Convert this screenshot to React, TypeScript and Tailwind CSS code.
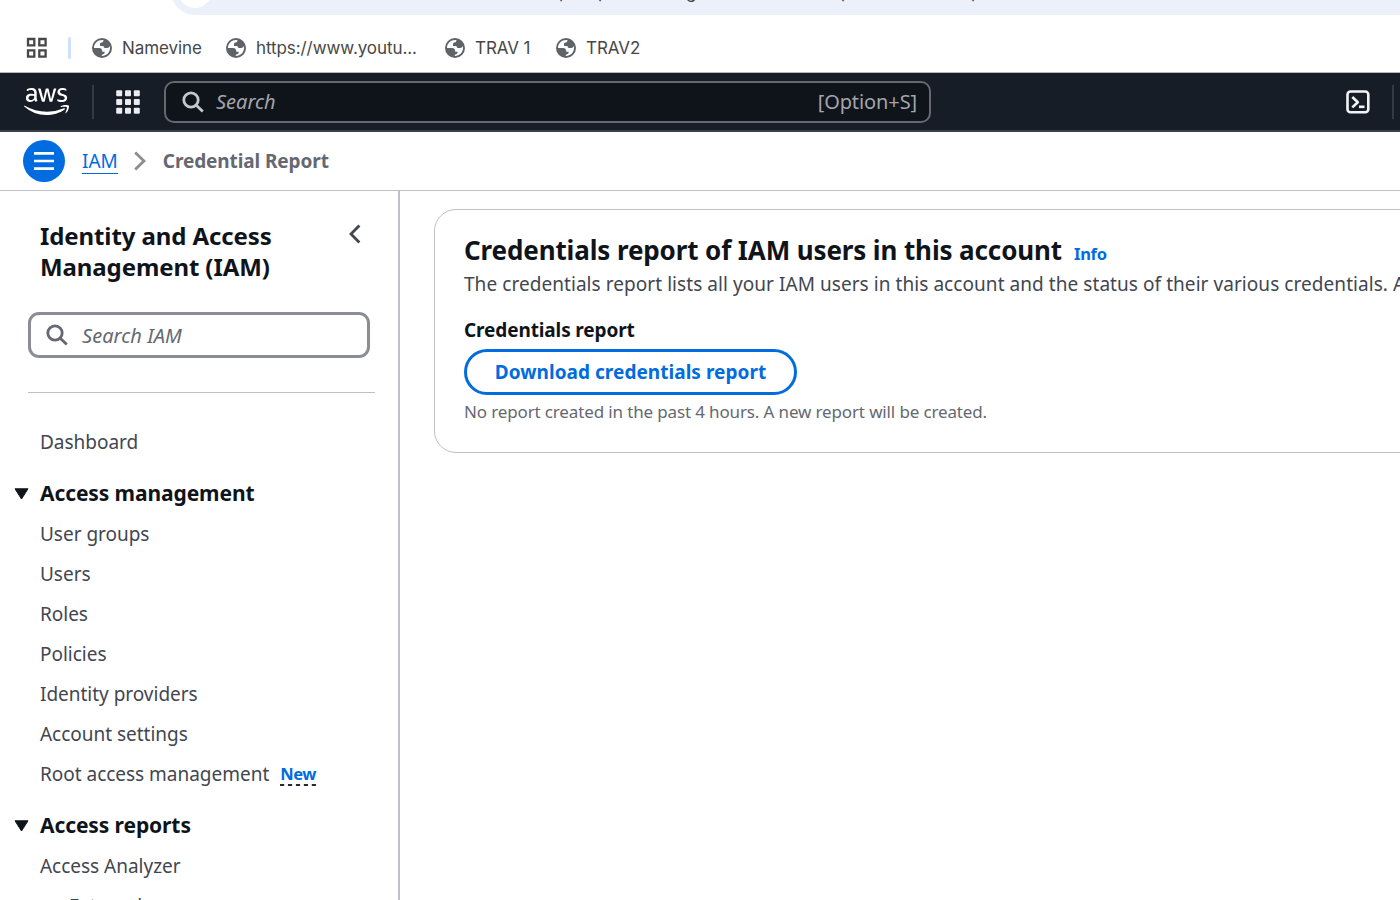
import React from "react";
import { FaAws } from "react-icons/fa";

function Globe() {
  return (
    <svg className="h-5 w-5 shrink-0" viewBox="0 0 20 20">
      <circle cx="10" cy="10" r="10" fill="#5f6368" />
      <path
        fill="#fff"
        d="M11.400 2.100C6.300 1.400 2 5.200 2 9.900h5.200c1.700 0 3 1.300 3 2.900v1h2.500c.2 1.600-.9 2.600-2.900 2.900v1.300c4.500.1 8.200-3.600 8.200-8 0-.7-.1-1.400-.3-2-.5 1.300-1.300 2-2.400 2h-1.600c-1.400 0-2.200-.8-2.200-2.100H8V6.100c0-1 .8-1.600 1.800-1.600 1 0 1.700-.9 1.600-2.400z"
      />
    </svg>
  );
}

function SearchIcon({ className }: { className: string }) {
  return (
    <svg className={className} viewBox="0 0 22 22" fill="none" stroke="currentColor" strokeWidth="2.8">
      <circle cx="9" cy="9" r="7.200" />
      <path d="M14 14l6.800 6.500" />
    </svg>
  );
}

function Bookmark({ label, className }: { label: string; className: string }) {
  return (
    <div className={`flex h-6 items-center gap-[10px] ${className}`}>
      <Globe />
      <span className="pt-px text-[17px] tracking-[-0.08px] whitespace-nowrap">{label}</span>
    </div>
  );
}

function Section({ label }: { label: string }) {
  return (
    <div className="mt-3 flex h-10 shrink-0 items-center">
      <svg className="mr-[11px] h-[12px] w-[15px]" viewBox="0 0 15 12">
        <path d="M1 .8h13L7.500 11z" fill="#0f141a" stroke="#0f141a" strokeLinejoin="round" />
      </svg>
      <span className="text-[21px] font-bold tracking-[-0.1px] text-[#0f141a]">{label}</span>
    </div>
  );
}

function Item({ label, tag }: { label: string; tag?: string }) {
  return (
    <div className="flex h-10 shrink-0 items-center pl-[26px] text-[19px] tracking-[-0.02px] text-[#424650]">
      {label}
      {tag && (
        <span className="ml-[11px] flex h-[24px] flex-col">
          <span className="h-[22px] text-[16.500px] leading-[23px] font-bold tracking-[-0.4px] text-[#006ce0]">{tag}</span>
          <svg className="h-[2px] w-9" viewBox="0 0 36 2">
            <path d="M0 1h36" stroke="#232b37" strokeWidth="2" strokeDasharray="4.200 3.740" />
          </svg>
        </span>
      )}
    </div>
  );
}

export default function App() {
  return (
    <div className="flex h-[900px] w-[1400px] flex-col overflow-hidden bg-white font-['Noto_Sans',sans-serif]">
      <div className="h-[72px] shrink-0 font-[Inter,sans-serif] text-[#474747]">
        <div className="flex h-[15px] items-end overflow-hidden pl-[171px]">
          <div className="flex h-12 w-[1300px] shrink-0 items-center rounded-full bg-[#ecf0fa] pl-[7px]">
            <div className="h-[34px] w-[34px] shrink-0 rounded-full bg-white" />
            <div className="flex pt-[2px] pl-[347px] text-[17px] leading-5">
              <span className="w-[39px]">p</span>
              <span className="w-[88px]">p</span>
              <span className="w-[155px]">g</span>
              <span className="w-[98px]">p</span>
              <span className="w-[32px] font-semibold">_</span>
              <span>p</span>
            </div>
          </div>
        </div>
        <div className="flex pt-[21px]">
          <div className="flex h-6 w-[92px] items-center pl-[26px]">
            <svg className="h-[22px] w-[22px]" viewBox="0 0 22 22" fill="none" stroke="#474747" strokeWidth="2.300">
              <path d="M2 2h6.300v6.300H2zM13.300 2h6.300v6.300h-6.300zM2 13.300h6.300v6.300H2zM13.300 13.300h6.300v6.300h-6.300z" />
            </svg>
            <div className="ml-5 h-[22px] w-[3px] rounded-full bg-[#d0e0fc]" />
          </div>
          <Bookmark label="Namevine" className="w-[134px]" />
          <Bookmark label="https://www.youtu..." className="w-[219px]" />
          <Bookmark label="TRAV 1" className="w-[111px]" />
          <Bookmark label="TRAV2" className="" />
        </div>
      </div>

      <header className="flex h-[60px] shrink-0 items-center border-t border-b-2 border-t-[#b4b8ba] border-b-[#3a414d] bg-[#161d26]">
        <FaAws className="ml-[24px] h-[37px] w-[45px] text-white" />
        <div className="ml-[23px] h-[34px] w-[2px] bg-[#333a46]" />
        <svg className="ml-[22px] h-6 w-6" viewBox="0 0 24 24" fill="#ebebf0">
          {[0, 8.8, 17.6].map((y) =>
            [0, 8.8, 17.6].map((x) => <rect key={`${x}-${y}`} x={x + 0.2} y={y + 0.2} width="6" height="6" rx="1" />)
          )}
        </svg>
        <div className="mt-px ml-[24px] flex h-[42px] w-[767px] items-center rounded-[10px] border-[2.500px] border-[#656871] bg-[#0f141a] text-[20px] text-[#a4a4ad]">
          <SearchIcon className="ml-4 h-[22px] w-[22px] text-[#c6c6cd]" />
          <span className="ml-3 flex-1 italic">Search</span>
          <span className="mr-3 tracking-[-0.1px]">[Option+S]</span>
        </div>
        <svg className="ml-[415px] h-6 w-6" viewBox="0 0 24 24" fill="none" stroke="#f3f3f7" strokeWidth="2.600">
          <rect x="1.500" y="1.500" width="20.800" height="20.800" rx="3" />
          <path d="M6.300 7l5.500 5.200-5.500 5.200" strokeLinejoin="round" />
          <path d="M13 16.800h5.500" />
        </svg>
        <div className="ml-[22px] h-[34px] w-[2px] bg-[#333a46]" />
      </header>

      <div className="flex h-[59px] shrink-0 items-center border-b border-[#c0c0c8] text-[19px]">
        <div className="ml-[23px] flex h-[42px] w-[42px] items-center justify-center rounded-full bg-[#006ce0]">
          <svg className="h-[20px] w-[20px]" viewBox="0 0 20 20" stroke="#fff" strokeWidth="2.700">
            <path d="M0 2.400h20M0 10h20M0 17.600h20" />
          </svg>
        </div>
        <span className="ml-[17px] h-[26px] border-b-[1.500px] border-[#006ce0] leading-[26px] text-[#006ce0]">IAM</span>
        <svg className="ml-[16px] h-[20px] w-3" viewBox="0 0 12 20" fill="none" stroke="#8c8c94" strokeWidth="2.800">
          <path d="M1.200 1.500l8.800 8.500-8.800 8.500" />
        </svg>
        <span className="ml-[17px] font-bold tracking-[-0.1px] text-[#656871]">Credential Report</span>
      </div>

      <div className="flex min-h-0 flex-1">
        <nav className="flex w-[400px] shrink-0 flex-col overflow-hidden border-r-2 border-[#c0c0c8] pl-[14px]">
          <div className="flex shrink-0 justify-between pt-[29px] pr-[37px] pl-[26px]">
            <div className="h-[63px] text-[24px] leading-[31px] font-bold tracking-[-0.1px] text-[#0f141a]">
              Identity and Access
              <br />
              Management (IAM)
            </div>
            <svg className="mt-1 h-[20px] w-[13px]" viewBox="0 0 13 20" fill="none" stroke="#424650" strokeWidth="2.800">
              <path d="M11.400 1.500L3 10l8.400 8.500" />
            </svg>
          </div>
          <div className="mt-[29px] ml-[14px] flex h-[46px] w-[342px] shrink-0 items-center rounded-[11px] border-3 border-[#8c8c94] text-[20px] text-[#656871] italic">
            <SearchIcon className="ml-[15px] h-[22px] w-[22px]" />
            <span className="mt-px ml-[14px] tracking-[0.05px]">Search IAM</span>
          </div>
          <div className="mt-[34px] mb-[29px] ml-[14px] h-px w-[347px] shrink-0 bg-[#c0c0c8]" />
          <Item label="Dashboard" />
          <Section label="Access management" />
          <Item label="User groups" />
          <Item label="Users" />
          <Item label="Roles" />
          <Item label="Policies" />
          <Item label="Identity providers" />
          <Item label="Account settings" />
          <Item label="Root access management" tag="New" />
          <Section label="Access reports" />
          <Item label="Access Analyzer" />
          <div className="pl-[29px]">
            <Item label="External access" />
          </div>
        </nav>

        <main className="flex-1 overflow-hidden pt-[18px] pl-[34px] whitespace-nowrap">
          <section className="h-[244px] w-[1100px] rounded-[22px] border border-[#c0c0c8] pt-[22px] pl-[29px]">
            <div className="flex h-9 items-baseline">
              <h1 className="text-[26px] leading-9 font-bold tracking-[-0.12px] text-[#0f141a]">
                Credentials report of IAM users in this account
              </h1>
              <span className="ml-3 text-[16.500px] font-bold tracking-[-0.3px] text-[#006ce0]">Info</span>
            </div>
            <p className="mt-px h-[30px] text-[19px] leading-[30px] tracking-[0.06px] text-[#424650]">
              The credentials report lists all your IAM users in this account and the status of their various credentials. After the report is created
            </p>
            <div className="mt-[17px] h-7 text-[19px] leading-7 font-bold tracking-[-0.12px] text-[#0f141a]">Credentials report</div>
            <button className="mt-[5px] flex h-[46px] w-[333px] items-center justify-center rounded-full border-3 border-[#006ce0] text-[19px] font-bold tracking-[0.04px] text-[#006ce0]">
              Download credentials report
            </button>
            <p className="mt-[5px] h-6 text-[17px] leading-6 tracking-[-0.14px] text-[#656871]">
              No report created in the past 4 hours. A new report will be created.
            </p>
          </section>
        </main>
      </div>
    </div>
  );
}
